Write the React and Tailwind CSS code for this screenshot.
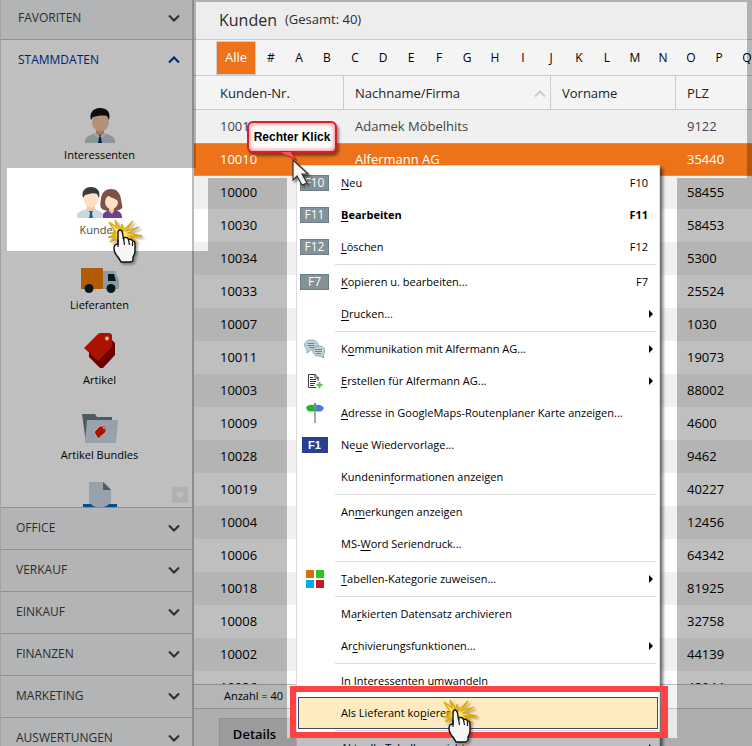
import React from "react";

const LETTERS = ["#", "A", "B", "C", "D", "E", "F", "G", "H", "I", "J", "K", "L", "M", "N", "O", "P", "Q"];

const ROWS = [
  { nr: "10011", firma: "Adamek Möbelhits", plz: "9122" },
  { nr: "10010", firma: "Alfermann AG", plz: "35440", selected: true },
  { nr: "10000", plz: "58455" },
  { nr: "10030", plz: "58453" },
  { nr: "10034", plz: "5300" },
  { nr: "10033", plz: "25524" },
  { nr: "10007", plz: "1030" },
  { nr: "10011", plz: "19073" },
  { nr: "10003", plz: "88002" },
  { nr: "10009", plz: "4600" },
  { nr: "10028", plz: "9462" },
  { nr: "10019", plz: "40227" },
  { nr: "10004", plz: "12456" },
  { nr: "10006", plz: "64342" },
  { nr: "10018", plz: "81925" },
  { nr: "10008", plz: "32758" },
  { nr: "10002", plz: "44139" },
  { nr: "10036", plz: "42944" },
];

const SECTIONS = ["OFFICE", "VERKAUF", "EINKAUF", "FINANZEN", "MARKETING", "AUSWERTUNGEN"];

const Chevron = ({ up }) => (
  <svg width="12" height="8" viewBox="0 0 12 8" fill="none" stroke="currentColor" strokeWidth="2">
    <path d={up ? "M1 6.500l5-5 5 5" : "M1 1.500l5 5 5-5"} />
  </svg>
);

const PersonIcon = () => (
  <svg width="30" height="35" viewBox="0 0 30 35">
    <path d="M0 35v-3c1-4 6-5 10-7h10c4 2 9 3 10 7v3z" fill="#bac8cd" />
    <path d="M11 21h8v4l-4 4-4-4z" fill="#dc9a7a" />
    <path d="M13 27h4l-1 3 1 5h-4l1-5z" fill="#002f85" />
    <path d="M10 25l5 3 5-3 1 2-4 3-2-2-2 2-4-3z" fill="#d5dfe3" />
    <ellipse cx="15.500" cy="14" rx="8.500" ry="9.500" fill="#efc0a0" />
    <path d="M6 12C4 5 8 0 15 0s11 4 9 12l-2-4c-5-1-10 0-14 1z" fill="#101010" />
  </svg>
);

const CoupleIcon = () => (
  <svg width="46" height="31" viewBox="0 0 46 31">
    <path d="M25 31c0-5 3-6 7-8h7c4 2 6 3 6 8z" fill="#6f3f92" />
    <path d="M25 22c-3-3-1-7-1-11C25 5 29 2 34 2s9 3 10 10c0 4 3 8 0 10-5 3-14 3-19 0z" fill="#7d5348" />
    <path d="M32 20h5v4l-2 3-3-3z" fill="#f3c6ac" />
    <ellipse cx="34.500" cy="15" rx="6.500" ry="7" fill="#ffdfc8" />
    <path d="M28 15c-1-4 1-6 3-7 2 3 7 3 10 6V9c-2-5-13-5-15 1z" fill="#7d5348" />
    <path d="M0 31v-3c1-4 5-4 9-6h9c4 2 8 3 8 6v3z" fill="#cbd9df" />
    <path d="M10 18h8v5l-4 3-4-3z" fill="#f3c6ac" />
    <path d="M12 24h4l-1 2 1 5h-4l1-5z" fill="#1c5ca8" />
    <ellipse cx="14" cy="12" rx="7.500" ry="8.500" fill="#ffdfc8" />
    <path d="M6 11C4 4 8 0 14 0s10 4 8 11l-2-4c-4-2-8 0-12 1z" fill="#3a3a3a" />
  </svg>
);

const TruckIcon = () => (
  <svg width="38" height="25" viewBox="0 0 38 25">
    <path d="M0 0h22v21H0z" fill="#ee7a05" />
    <path d="M22 3h12l4 9v9H22z" fill="#bfccd6" />
    <path d="M27 6h6l2 7h-8z" fill="#04222e" />
    <circle cx="8" cy="20.500" r="4.500" fill="#04222e" />
    <circle cx="30" cy="20.500" r="4.500" fill="#04222e" />
  </svg>
);

const TagIcon = () => (
  <svg width="32" height="35" viewBox="0 0 32 35">
    <path d="M5 14v10l11 11h3l12-13V10L27 6z" fill="#910000" />
    <path d="M0 15L14 1q1-1 3-1h8q2 0 3 2v10q0 2-1 3L14 28z" fill="#e61800" />
    <circle cx="23" cy="5.500" r="2" fill="#fff" />
  </svg>
);

const FolderIcon = () => (
  <svg width="36" height="29" viewBox="0 0 36 29">
    <path d="M0 0h13l2 3h15v4L4 29z" fill="#647d85" />
    <path d="M5 6h31l-2 23H3z" fill="#ccd8e6" />
    <path d="M12 18l6-6h6v6l-8 7z" fill="#e61800" stroke="#eef2f6" />
    <circle cx="22" cy="14" r="1" fill="#fff" />
  </svg>
);

const DocumentIcon = () => (
  <svg width="34" height="36" viewBox="0 0 34 36">
    <path d="M0 22h34v14H0z" fill="#0068b8" />
    <path d="M6 0h15l7 7v14c-3 1-4 4-8 4h-6c-4 0-5-3-8-4z" fill="#ccd8e6" />
    <path d="M20 0l8 8h-8z" fill="#647d85" />
  </svg>
);

const HandCursor = () => (
  <svg width="37" height="44" viewBox="0 0 37 44" className="drop-shadow-[2px_2px_1px_rgba(0,0,0,0.35)]">
    <path
      d="M14 12L16 4l1 7 10-10-7 10 13-4-11 6 14 3-13 0 8 6-12-5-6 1-9 4 6-5-8 0 7-2-5-2 6 0L3 2l8 6L9 0l4 7z"
      fill="#ffe27a"
      stroke="#e0a800"
      strokeWidth="1.300"
    />
    <path
      d="M12 13q0-3 2-3t2.500 3l1 6q1-2 3-1.500 1.500.3 2 2 3-1 4 1.500 2.500 0 2.500 3v7q0 3-2 6v3q-1 2-3 2H15q-1-2-3-5-4-4-4-9 0-4 4-4z"
      fill="#f6f6f6"
      stroke="#111"
      strokeWidth="1.400"
    />
    <path d="M12 20v7m5.500-9l1 7m4-5l1 5m3-3v4" stroke="#111" strokeWidth="1.200" fill="none" />
  </svg>
);

const KeyBadge = ({ children }) => (
  <span className="flex h-4 w-[29px] items-center justify-center border border-[#6d7d84] bg-[#839198] text-xs text-white">
    {children}
  </span>
);

const ChatIcon = () => (
  <svg width="22" height="20" viewBox="0 0 22 20" stroke="#8fa3b0">
    <path d="M3 10C-1 7 0 1 7 1s9 6 5 9c-2 1-3 1-5 1l-4 3z" fill="#c3d4df" />
    <path d="M3.500 4.500h7M3.500 6.500h7M5 8.500h5" stroke="#6d8391" />
    <path d="M11 16c-4-3-2-9 4-9s7 6 4 9l1 3-4-2c-2 0-4 0-5-1z" fill="#c3d4df" />
    <path d="M11 10.500h7M11 12.500h7M12 14.500h5" stroke="#6d8391" />
  </svg>
);

const NewDocIcon = () => (
  <svg width="16" height="16" viewBox="0 0 16 16" fill="none" stroke="#3b3b3b">
    <path d="M9 14.500H1.500v-13H8l3 3V8" />
    <path d="M8 1v4h4M3 4.500h3M3 6.500h6M3 8.500h6M3 10.500h5M3 12.500h4" />
    <path d="M12.500 9v6M9.500 12h6" stroke="#69bd5b" strokeWidth="2" />
  </svg>
);

const SignpostIcon = () => (
  <svg width="18" height="20" viewBox="0 0 18 20">
    <path d="M8 0h2v20H8z" fill="#a5abb0" />
    <path d="M0 5l1-2q4-2 8-1v6q-4 1-7 0z" fill="#26b51e" />
    <path d="M9 2q4-1 7 1l2 2-2 3q-3 1-7 0z" fill="#4a79dc" />
    <path d="M8 0h2v7H8z" fill="#778c98" />
  </svg>
);

const TilesIcon = () => (
  <span className="grid grid-cols-2 gap-0.5">
    <span className="size-2 bg-[#e2680f]" />
    <span className="size-2 bg-[#2bc51c]" />
    <span className="size-2 bg-[#00adf0]" />
    <span className="size-2 bg-[#c01a27]" />
  </span>
);

const NAV_ITEMS = [
  { label: "Interessenten", icon: <PersonIcon /> },
  { label: "Kunden", icon: <CoupleIcon />, active: true },
  { label: "Lieferanten", icon: <TruckIcon /> },
  { label: "Artikel", icon: <TagIcon /> },
  { label: "Artikel Bundles", icon: <FolderIcon /> },
  { label: "", name: "Belege", icon: <DocumentIcon /> },
];

// text is [before, accelerator, after]
const MENU = [
  { text: ["", "N", "eu"], icon: <KeyBadge>F10</KeyBadge>, shortcut: "F10" },
  { text: ["", "B", "earbeiten"], icon: <KeyBadge>F11</KeyBadge>, shortcut: "F11", bold: true },
  { text: ["", "L", "öschen"], icon: <KeyBadge>F12</KeyBadge>, shortcut: "F12" },
  { separator: true },
  { text: ["", "K", "opieren u. bearbeiten..."], icon: <KeyBadge>F7</KeyBadge>, shortcut: "F7" },
  { text: ["", "D", "rucken..."], submenu: true },
  { separator: true },
  { text: ["K", "o", "mmunikation mit Alfermann AG..."], icon: <ChatIcon />, submenu: true },
  { text: ["", "E", "rstellen für Alfermann AG..."], icon: <NewDocIcon />, submenu: true },
  { text: ["", "A", "dresse in GoogleMaps-Routenplaner Karte anzeigen..."], icon: <SignpostIcon /> },
  {
    text: ["Ne", "u", "e Wiedervorlage..."],
    icon: (
      <span className="flex h-4 w-[26px] items-center justify-center bg-[#27408f] font-['Liberation_Sans',sans-serif] text-[11px] font-bold text-white">
        F1
      </span>
    ),
  },
  { text: ["Kundenin", "f", "ormationen anzeigen"] },
  { separator: true },
  { text: ["An", "m", "erkungen anzeigen"] },
  { text: ["MS-", "W", "ord Seriendruck..."] },
  { separator: true },
  { text: ["", "T", "abellen-Kategorie zuweisen..."], icon: <TilesIcon />, submenu: true },
  { separator: true },
  { text: ["Ma", "r", "kierten Datensatz archivieren"] },
  { text: ["Ar", "c", "hivierungsfunktionen..."], submenu: true },
  { separator: true },
  { text: ["", "I", "n Interessenten umwandeln"] },
  { text: ["Als Lieferant ko", "p", "ieren"], highlighted: true },
  { separator: true },
  { text: ["Aktuelle Tabellenansicht...", "", ""], submenu: true },
];

const Sidebar = () => (
  <nav className="flex w-[194px] shrink-0 flex-col border-r-2 border-l border-r-[#bbbbbb] border-l-[#d8d8d8] bg-white">
    <button className="flex h-10 shrink-0 items-center justify-between border-b border-[#bfbfbf] bg-[#eef1f3] pr-3 pb-1 pl-[17px] text-xs text-[#3c3c3c]">
      FAVORITEN
      <Chevron />
    </button>
    <button className="flex h-10 shrink-0 items-center justify-between pr-3 pl-[17px] text-xs font-medium text-[#002b9c]">
      STAMMDATEN
      <Chevron up />
    </button>
    <div className="relative h-[427px] shrink-0 overflow-hidden pt-[13px]">
      {NAV_ITEMS.map((item) => (
        <a
          key={item.label || item.name}
          href="#"
          aria-label={item.label || item.name}
          className="relative flex h-[75px] flex-col items-center pl-[6px] text-[11px] text-black"
        >
          <span className="flex h-[50px] items-end">{item.icon}</span>
          <span className={`mt-1 leading-4 ${item.active ? "text-[#4a4a4a]" : ""}`}>{item.label}</span>
          {item.active && (
            <span className="absolute top-[52px] left-[105px] z-20">
              <HandCursor />
            </span>
          )}
        </a>
      ))}
      <span className="absolute right-1 bottom-1 flex size-4 items-center justify-center bg-[#ebedf0]">
        <svg width="8" height="6" viewBox="0 0 8 6">
          <path d="M1 0h6l1 2-4 4-4-4z" fill="#fff" />
        </svg>
      </span>
    </div>
    {SECTIONS.map((section) => (
      <button
        key={section}
        className="flex h-[42px] shrink-0 items-center justify-between border-t border-[#bfbfbf] bg-[#eef1f3] pr-3 pb-0.5 pl-[15px] text-xs text-[#3c3c3c]"
      >
        {section}
        <Chevron />
      </button>
    ))}
  </nav>
);

const HEAD_CELL = "border-r border-b border-[#cccccc] pt-0.5 font-medium";

const CustomerTable = () => (
  <table className="w-full table-fixed border-separate border-spacing-0 text-left text-[13px]">
    <colgroup>
      <col className="w-[150px]" />
      <col className="w-[207px]" />
      <col className="w-[125px]" />
      <col />
    </colgroup>
    <thead>
      <tr className="h-[34px] bg-[#f4f4f4] text-[#222]">
        <th className={`${HEAD_CELL} pl-[26px]`}>Kunden-Nr.</th>
        <th className={`${HEAD_CELL} pr-1 pl-[11px]`}>
          <span className="flex items-center justify-between text-[#222]">
            Nachname/Firma
            <span className="text-[#cccccc]">
              <Chevron up />
            </span>
          </span>
        </th>
        <th className={`${HEAD_CELL} pl-[11px]`}>Vorname</th>
        <th className="border-b border-[#cccccc] pt-0.5 pl-[11px] font-medium">PLZ</th>
      </tr>
    </thead>
    <tbody>
      {ROWS.map((row, idx) => (
        <tr
          key={idx}
          className={`h-[33px] ${
            row.selected
              ? "bg-[#ec731a] text-white *:border-y *:border-[#9f9f9f]"
              : idx % 2 === 0
                ? "bg-[#f0f0f0]"
                : "bg-white"
          } ${idx === 0 ? "text-[#444]" : ""}`}
        >
          <td className="pl-[26px]">{row.nr}</td>
          <td className="pl-[11px]">{row.firma}</td>
          <td />
          <td className="pl-[11px]">{row.plz}</td>
        </tr>
      ))}
    </tbody>
  </table>
);

const ContextMenu = () => (
  <div
    role="menu"
    className="absolute top-[165px] left-[296px] w-[364px] border border-[#dcdcdc] bg-white p-px text-[11px] text-black shadow-[3px_3px_3px_rgba(0,0,0,0.55)]"
  >
    {MENU.map((item, idx) =>
      item.separator ? (
        <div key={idx} role="separator" className="mr-0.5 ml-[37px] flex h-[3px] items-center">
          <span className="h-px w-full bg-[#dcdcdc]" />
        </div>
      ) : (
        <button
          key={idx}
          role="menuitem"
          className={`relative flex h-8 w-full items-center text-left ${item.bold ? "font-bold" : ""} ${
            item.highlighted ? "border border-[#45456a] bg-[#ffebc0]" : ""
          }`}
        >
          <span className={`flex shrink-0 justify-center font-normal ${item.highlighted ? "w-8" : "w-[33px]"}`}>
            {item.icon}
          </span>
          <span className="grow pl-2.5 whitespace-nowrap">
            {item.text[0]}
            <span className="underline underline-offset-2">{item.text[1]}</span>
            {item.text[2]}
          </span>
          {item.shortcut && <span className="pr-2.5">{item.shortcut}</span>}
          {item.submenu && (
            <svg width="4" height="8" viewBox="0 0 4 8" className="mr-[5px]">
              <path d="M0 0l4 4-4 4z" fill="#000" />
            </svg>
          )}
          {item.highlighted && (
            <>
              <span className="absolute -top-3 -right-[11px] -bottom-2.5 -left-[9px] z-20 border-[6px] border-[#ff4343]" />
              <span className="absolute top-0.5 left-[142px] z-20">
                <HandCursor />
              </span>
            </>
          )}
        </button>
      )
    )}
  </div>
);

const ClickCallout = () => (
  <div className="absolute top-[121px] left-[247px] z-20">
    <div className="flex h-8 w-[90px] items-center justify-center rounded-md border-2 border-[#d3202a] bg-white font-['Liberation_Sans',sans-serif] text-xs font-bold whitespace-nowrap text-black shadow-[inset_0_0_4px_1px_rgba(235,50,60,0.6),2px_3px_3px_rgba(0,0,0,0.45)]">
      Rechter Klick
    </div>
    <svg width="36" height="40" viewBox="0 0 36 40" className="absolute top-[29px] left-[30px]">
      <path d="M2 1.500c5 4 12 5 18 9L14 1.500z" fill="#f0555c" stroke="#c91722" />
      <path
        d="M16 10v20l4-4 5 9 5-2-5-9h6z"
        fill="#f5f5f5"
        stroke="#333"
        strokeWidth="1.200"
        className="drop-shadow-[2px_2px_1px_rgba(0,0,0,0.5)]"
      />
    </svg>
  </div>
);

export default function App() {
  return (
    <div className="relative flex h-screen overflow-hidden bg-white font-['Open_Sans','Noto_Sans',sans-serif]">
      <Sidebar />

      <main className="flex min-w-0 flex-1 flex-col">
        <header className="flex h-10 shrink-0 items-center gap-2 border-b border-[#cccccc] bg-[#ededed] pl-[25px] text-[#2c2c2c]">
          <h1 className="text-base font-medium">Kunden</h1>
          <span className="text-[13px]">(Gesamt: 40)</span>
        </header>

        <div className="flex h-9 shrink-0 items-center overflow-hidden border-b border-[#cccccc] bg-[#f4f4f4] pl-[22px] text-xs">
          <button className="mr-px h-[34px] w-10 shrink-0 border border-[#cfcfcf] bg-[#ec731a] text-[13px] text-white">
            Alle
          </button>
          {LETTERS.map((letter) => (
            <button key={letter} className="h-8 w-7 shrink-0 text-black">
              {letter}
            </button>
          ))}
        </div>

        <div className="min-h-0 flex-1 overflow-hidden">
          <CustomerTable />
        </div>

        <div className="flex h-[25px] shrink-0 items-center border-y border-[#bfbfbf] bg-[#f0f2f4] pl-[30px] text-[11px] font-medium">
          Anzahl = 40
        </div>
        <div className="flex h-[37px] shrink-0 items-end bg-[#e8e8e8] pl-[25px]">
          <button className="h-7 w-[90px] border-t border-l border-[#bfbfbf] bg-[#cfcfcf] pt-1 pr-5 text-[13px] font-semibold">
            Details
          </button>
        </div>
      </main>

      <ContextMenu />

      {/* Dims everything except the active module, the table head and the menu */}
      <div className="pointer-events-none absolute inset-0 z-10 bg-black/25 [clip-path:polygon(evenodd,0_0,100%_0,100%_100%,0_100%,0_0,196px_2px,747px_2px,747px_178px,677px_178px,677px_738px,287px_738px,287px_178px,208px_178px,208px_251px,7px_251px,7px_168px,196px_168px,196px_2px,0_0)]" />

      <ClickCallout />
    </div>
  );
}
